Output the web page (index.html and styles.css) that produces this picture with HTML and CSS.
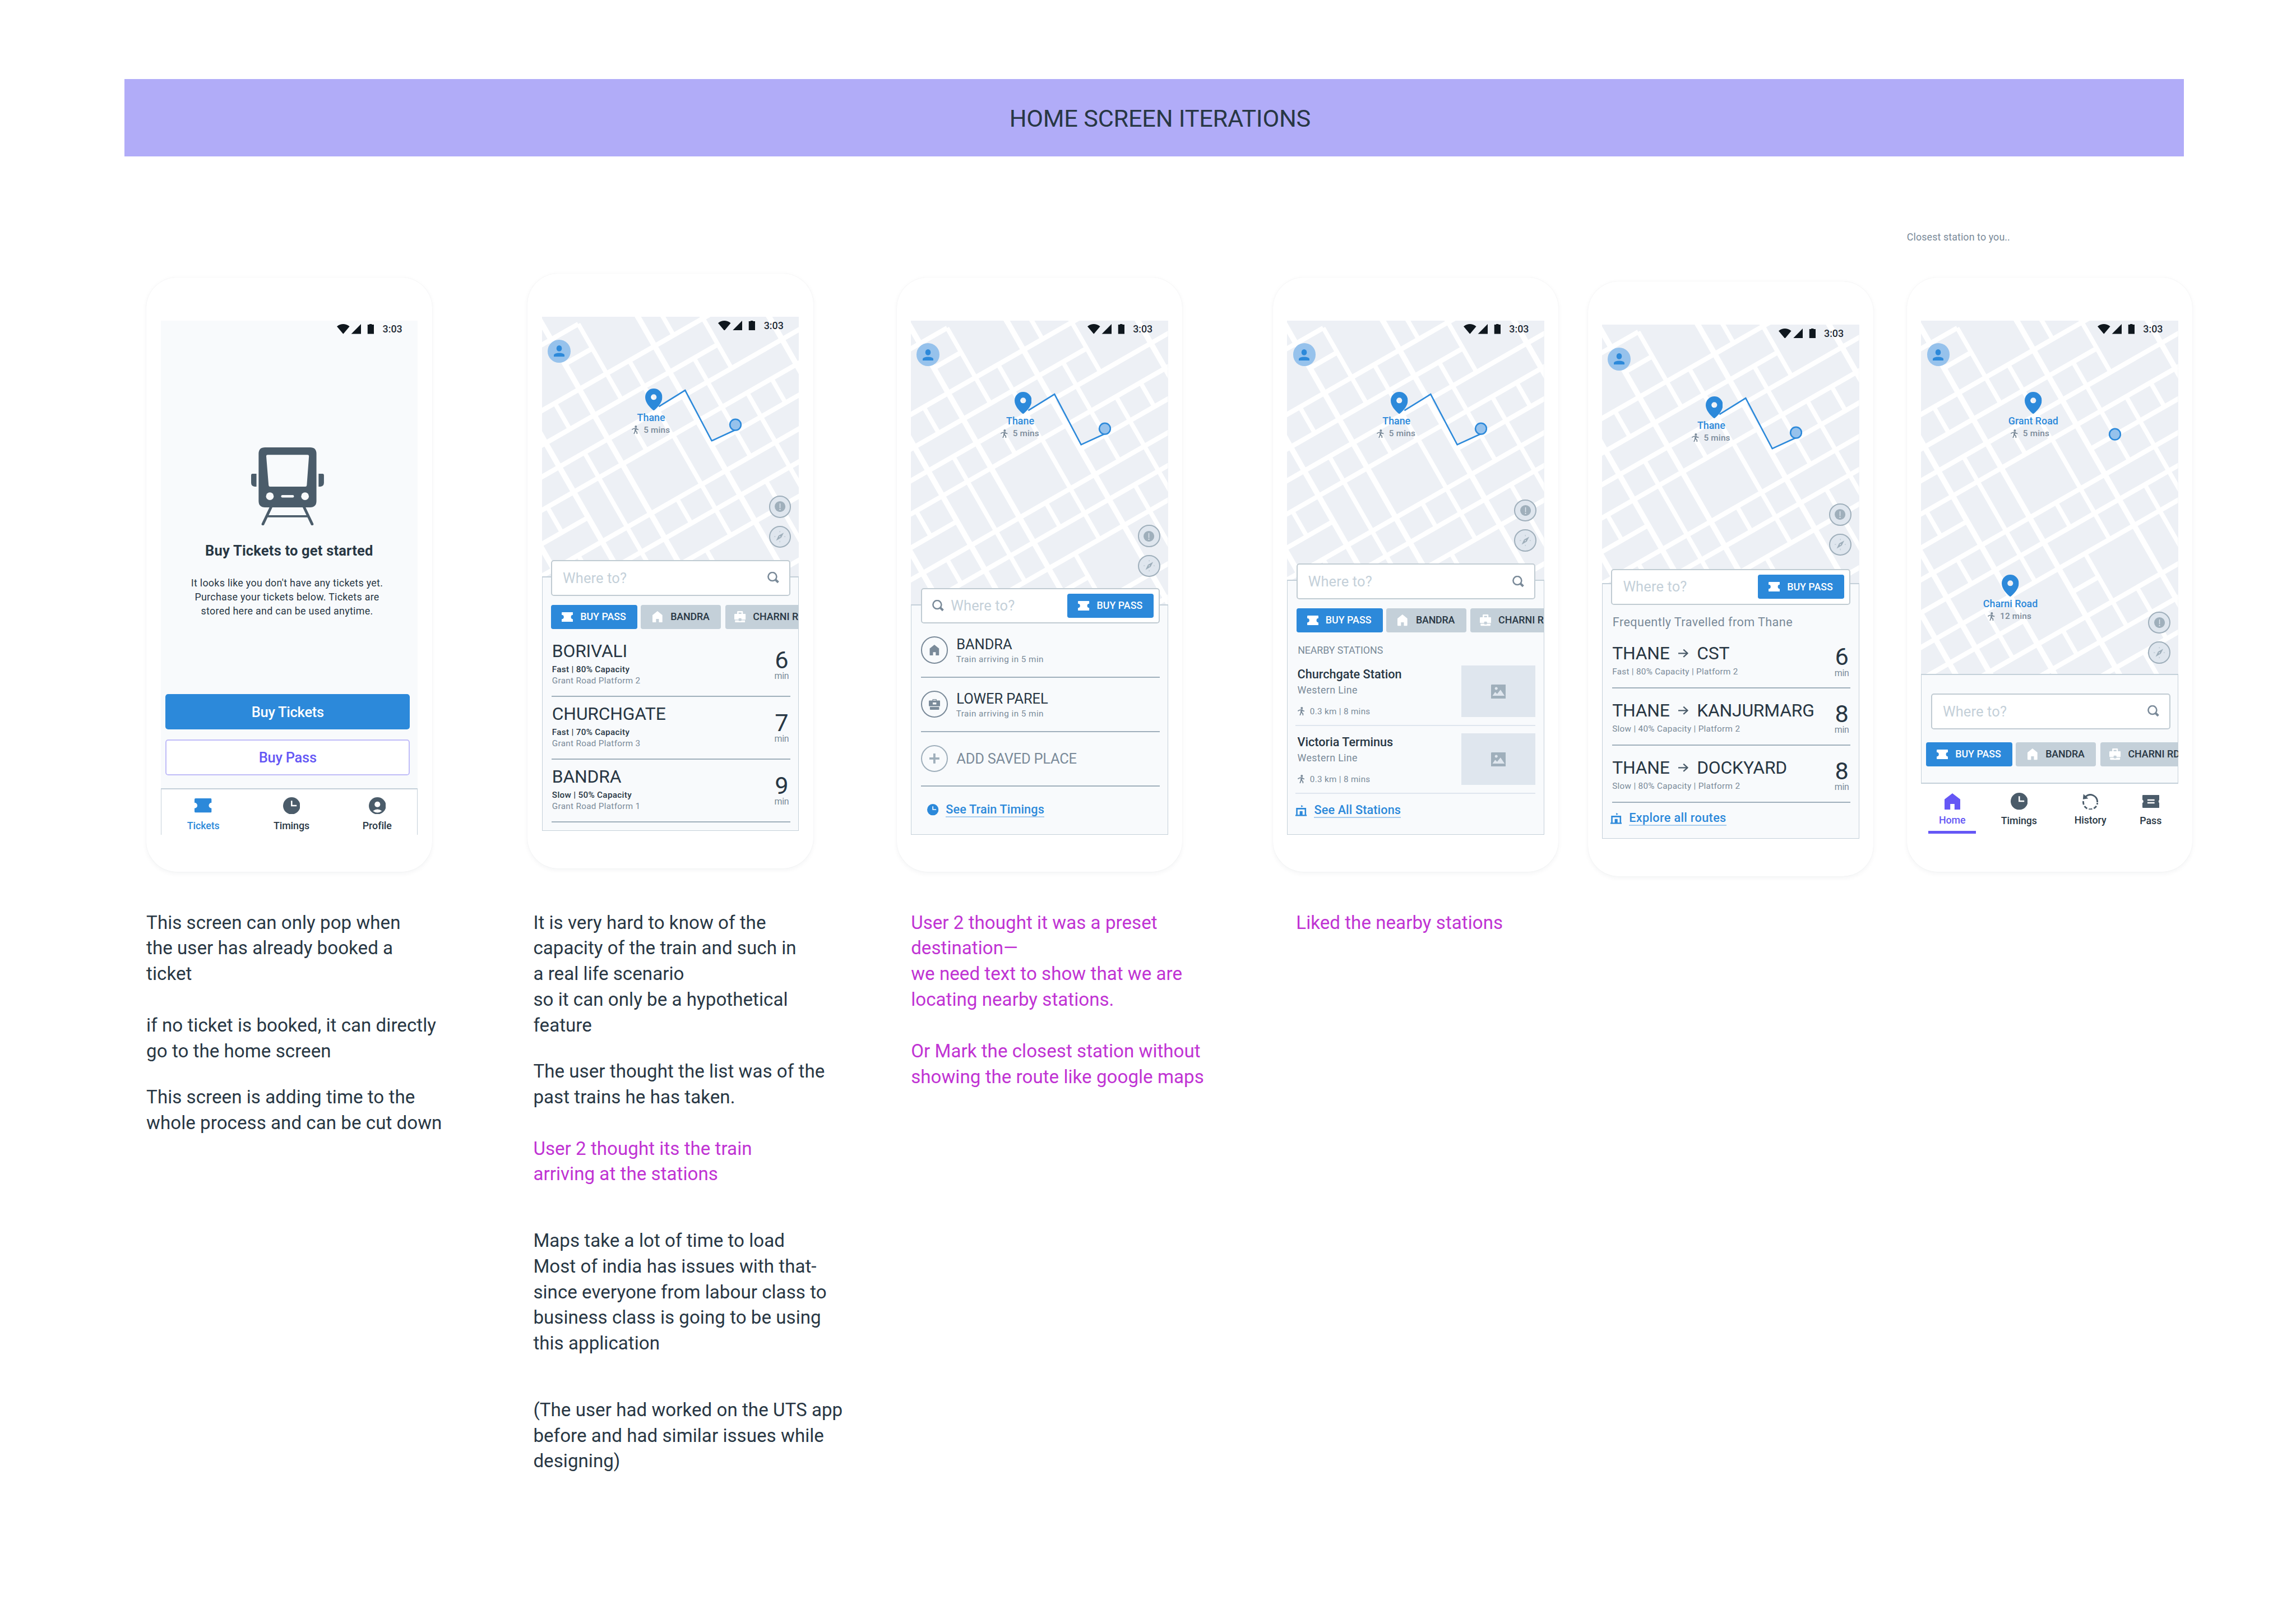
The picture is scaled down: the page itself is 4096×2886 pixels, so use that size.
FILE: index.html
```html
<!DOCTYPE html>
<html lang="en">
<head>
<meta charset="utf-8">
<title>Home screen iterations</title>
<link rel="stylesheet" href="styles.css">
</head>
<body>
<svg class="defs" width="0" height="0" aria-hidden="true">
  <defs>
    <symbol id="map" viewBox="0 0 720 1000">
      <g transform="rotate(-29.8)" fill="none" stroke="#fff">
        <path stroke-width="13.5" d="M-60 68H78M-150 228H722M-200 312H389M-245 389H630M-290 470H583M-340 552H-167M233 548H539M-380 630H492M-430 710H446M-480 794H398M-520 872H-167M-560 949H309M-560 1030H263M-560 1115H214M-10 147H78M-10 870H75"/>
        <path stroke-width="15.5" d="M-10 -20V1150M-167 -110V1060M233 120V1082M552 300V525M-323 552V970M-408 711V920"/>
        <path stroke-width="12.5" d="M78 68V312M294 150V228M389 200V389M151 228V470M154 470V794M312 312V630M-89 228V312M-86 389V794M68 389V470M-252 470V552M-244 630V710M-247 794V949M75 630V710M75 794V1030M81 1115V1210M154 949V1115M-86 949V1030M393 470V802M472 470V548M316 710V937"/>
        <path stroke-width="15.5" d="M233 100V140M552 290V320"/>
        <path stroke-width="12.5" d="M294 140V170M389 195V220"/>
      </g>
    </symbol>
    <symbol id="status" viewBox="0 0 104 28">
      <path fill="#0f171e" d="M0 6.5Q17.5-6.5 35.500 6.500L17.750 28zM67.500 0V28H40zM86 1.500H91V0H98V1.500H104V28H86z"/>
    </symbol>
    <symbol id="user" viewBox="0 0 30 32"><ellipse cx="15" cy="8.500" rx="7.500" ry="8.500"/><path d="M0 32v-4q0-3 4-4.700Q15 19 26 23.300q4 1.700 4 4.700v4z"/></symbol>
    <symbol id="pin" viewBox="0 0 48 62"><path fill-rule="evenodd" d="M24 0A24 24 0 0 0 0 24C0 40 14 54 24 62C34 54 48 40 48 24A24 24 0 0 0 24 0zM24 16a8 8 0 1 1 0 16a8 8 0 1 1 0-16z"/></symbol>
    <symbol id="walk" viewBox="0 0 20 24"><circle cx="11.500" cy="3.200" r="3.200"/><path fill="none" stroke="currentColor" stroke-width="2.800" d="M.6 11.500Q4 8.500 9 8.200M13 8.500L15 11l4.600.6M11 7.500L9 16l-2.500 7.500M11 15.500l3.500 3 .3 5.300"/><path d="M9 7h5l-2 9H8z"/></symbol>
    <symbol id="alert" viewBox="0 0 30 30"><circle cx="15" cy="15" r="15"/><path fill="#dfe6ee" d="M13.800 6h2.400v13.500h-2.400z"/><circle cx="15" cy="23.500" r="1.800" fill="#dfe6ee"/></symbol>
    <symbol id="compass" viewBox="0 0 32 32"><path fill-rule="evenodd" d="M27 5L20 19L5.500 27.500L12.500 13zM16 14.500a1.700 1.700 0 1 0 0 3.400a1.700 1.700 0 1 0 0-3.400z"/><path opacity=".55" d="M15 0h2v4h-2zM15 28h2v4h-2zM0 15h4v2H0zM28 15h4v2h-4z"/></symbol>
    <symbol id="ticket" viewBox="0 0 32 27"><path d="M2 0h28q2 0 2 2v5.500a6 6 0 0 0 0 12v5.500q0 2-2 2H2q-2 0-2-2v-5.500a6 6 0 0 0 0-12V2q0-2 2-2z"/></symbol>
    <symbol id="ticket-lg" viewBox="0 0 48 40"><path d="M3 0h42q3 0 3 3v9a8 8 0 0 0 0 16v9q0 3-3 3H3q-3 0-3-3v-9a8 8 0 0 0 0-16V3q0-3 3-3z"/></symbol>
    <symbol id="pass" viewBox="0 0 48 36"><path fill-rule="evenodd" d="M2 0h44q2 0 2 2v11.500a5 5 0 0 0 0 9V34q0 2-2 2H2q-2 0-2-2V22.500a5 5 0 0 0 0-9V2q0-2 2-2zM14 12v4h20v-4zM14 20v4h20v-4z"/></symbol>
    <symbol id="home" viewBox="0 0 28 32"><path d="M14 0L28 11.500V30q0 2-2 2h-8V22h-8v10H2q-2 0-2-2V11.500z"/></symbol>
    <symbol id="home-lg" viewBox="0 0 44 46"><path d="M22 0L44 17V44q0 2-2 2H28V30H16v16H2q-2 0-2-2V17z"/></symbol>
    <symbol id="case" viewBox="0 0 32 32"><path fill-rule="evenodd" d="M8 8V2q0-2 2-2h12q2 0 2 2v6h6q2 0 2 2v12q0 2-2 2H20v-2q0-2-2-2h-4q-2 0-2 2v2H2q-2 0-2-2V10q0-2 2-2zM12 4v4h8V4z"/><path d="M2 26h10q0 2 2 2h4q2 0 2-2h10v4q0 2-2 2H4q-2 0-2-2z"/></symbol>
    <symbol id="case-dark" viewBox="0 0 32 30"><path fill-rule="evenodd" d="M10 4V2q0-2 2-2h8q2 0 2 2v2h8q2 0 2 2v12q0 2-2 2H2q-2 0-2-2V6q0-2 2-2zM12 2v2h8V2zM11 9.500v5.500h10V9.500z"/><path d="M3 22h26v6q0 2-2 2H5q-2 0-2-2z"/></symbol>
    <symbol id="search" viewBox="0 0 33 33"><circle cx="14" cy="13.500" r="11.800" fill="none" stroke="currentColor" stroke-width="4"/><path fill="none" stroke="currentColor" stroke-width="6.500" d="M21.500 21L30.500 29.500"/></symbol>
    <symbol id="clock" viewBox="0 0 48 48"><circle cx="24" cy="24" r="24"/><path fill="none" stroke="#fff" stroke-width="4" d="M24 10V23.500H38"/></symbol>
    <symbol id="profile" viewBox="0 0 48 48"><circle cx="24" cy="24" r="24"/><circle cx="24" cy="20" r="8" fill="#fff"/><path fill="#fff" d="M11.500 38.500Q24 29 36.500 38.500Q24 48 11.500 38.500z"/></symbol>
    <symbol id="history" viewBox="0 0 44 46"><path fill="none" stroke="currentColor" stroke-width="4.500" d="M9 9.500A19.800 21 0 0 1 42 25"/><path fill="none" stroke="currentColor" stroke-width="4.500" stroke-dasharray="10 4.700" d="M2.500 22A19.800 20.500 0 0 0 42 27"/><path d="M2.800 2L1.300 17L16.300 14.600z"/></symbol>
    <symbol id="station" viewBox="0 0 32 31"><path d="M0 27h32v4H0zM12 17h8v10h-8zM16 0l6 3-6 3z"/><path fill="none" stroke="currentColor" stroke-width="4" d="M4 28V10H28V28"/></symbol>
    <symbol id="image" viewBox="0 0 42 40"><path fill-rule="evenodd" d="M2 0h38q2 0 2 2v36q0 2-2 2H2q-2 0-2-2V2q0-2 2-2zM14.500 7a4 4 0 1 0 .01 0zM4 31.500H38L26.500 14.500L17 26.500L11.500 21z"/></symbol>
    <symbol id="arrow" viewBox="0 0 28 26"><path fill="none" stroke="currentColor" stroke-width="3.600" d="M0 13H26M14.500 2.500L26 13L14.500 23.500"/></symbol>
  </defs>
</svg>

<header class="banner">HOME SCREEN ITERATIONS</header>

<main class="board">
  <!-- 1: empty ticket wallet -->
  <section class="phone">
    <div class="screen wallet">
      <div class="statusbar"><svg><use href="#status"/></svg><span>3:03</span></div>
      <svg class="train" viewBox="0 0 204 219">
        <path fill-rule="evenodd" d="M39 0H165Q183 0 183 18V150Q183 168 165 168H39Q21 168 21 150V18Q21 0 39 0zM46 21Q42 21 42.400 25L49 106Q49.500 110 53 110H152Q155.500 110 156 106L162 25Q162.500 21 158 21z"/>
        <path d="M0 78Q0 74 4 74H15V110H10Q0 109 0 99zM204 78Q204 74 200 74H189V110H194Q204 109 204 99z"/>
        <circle cx="52.500" cy="137" r="10.800" fill="#f8fafc"/><circle cx="151" cy="137" r="10.800" fill="#f8fafc"/>
        <rect x="84" y="133.500" width="36" height="7" rx="3.500" fill="#f8fafc"/>
        <path fill="none" stroke="#4b5c6a" stroke-width="7.500" stroke-linecap="round" d="M56 167L33 215M148 167L171 215"/>
        <path stroke="#4b5c6a" stroke-width="6" d="M44 193H160"/>
      </svg>
      <h2>Buy Tickets to get started</h2>
      <p>It looks like you don't have any tickets yet.<br>Purchase your tickets below. Tickets are<br>stored here and can be used anytime.</p>
      <div class="btn btn-fill">Buy Tickets</div>
      <div class="btn btn-line">Buy Pass</div>
      <nav class="tabs tabs-3">
        <div class="tab on"><svg class="i48 t40"><use href="#ticket-lg"/></svg><span>Tickets</span></div>
        <div class="tab"><svg class="i48"><use href="#clock"/></svg><span>Timings</span></div>
        <div class="tab"><svg class="i48"><use href="#profile"/></svg><span>Profile</span></div>
      </nav>
    </div>
  </section>

  <!-- 2: upcoming trains -->
  <section class="phone up">
    <div class="screen">
      <div class="map h726">
        <svg class="streets"><use href="#map"/></svg>
        <div class="statusbar"><svg><use href="#status"/></svg><span>3:03</span></div>
        <div class="avatar"><svg><use href="#user"/></svg></div>
        <svg class="route" viewBox="0 0 240 170"><path d="M8.600 53.600L82 8L156.500 149.500L223 119"/><circle cx="223" cy="104.600" r="15.500"/></svg>
        <div class="stop"><svg class="pin"><use href="#pin"/></svg><b class="l8">Thane</b><i class="l9"><svg><use href="#walk"/></svg>5 mins</i></div>
        <div class="tools"><span><svg class="a"><use href="#alert"/></svg></span><span><svg><use href="#compass"/></svg></span></div>
      </div>
      <div class="panel p2">
        <div class="search"><span>Where to?</span><svg class="mag"><use href="#search"/></svg></div>
        <div class="chips">
          <div class="chip pass"><svg class="tk"><use href="#ticket"/></svg>BUY PASS</div>
          <div class="chip c2"><svg class="hm"><use href="#home"/></svg>BANDRA</div>
          <div class="chip c3"><svg class="cs"><use href="#case"/></svg>CHARNI RD</div>
        </div>
        <div class="trains">
          <div class="train-row"><div><h3>BORIVALI</h3><p class="dark">Fast | 80% Capacity</p><p>Grant Road Platform 2</p></div><div class="eta"><b>6</b><span>min</span></div></div>
          <div class="train-row"><div><h3>CHURCHGATE</h3><p class="dark">Fast | 70% Capacity</p><p>Grant Road Platform 3</p></div><div class="eta"><b>7</b><span>min</span></div></div>
          <div class="train-row"><div><h3>BANDRA</h3><p class="dark">Slow | 50% Capacity</p><p>Grant Road Platform 1</p></div><div class="eta"><b>9</b><span>min</span></div></div>
        </div>
      </div>
    </div>
  </section>

  <!-- 3: saved places -->
  <section class="phone">
    <div class="screen">
      <div class="map h796">
        <svg class="streets"><use href="#map"/></svg>
        <div class="statusbar"><svg><use href="#status"/></svg><span>3:03</span></div>
        <div class="avatar"><svg><use href="#user"/></svg></div>
        <svg class="route" viewBox="0 0 240 170"><path d="M8.600 53.600L82 8L156.500 149.500L223 119"/><circle cx="223" cy="104.600" r="15.500"/></svg>
        <div class="stop"><svg class="pin"><use href="#pin"/></svg><b class="l8">Thane</b><i class="l9"><svg><use href="#walk"/></svg>5 mins</i></div>
        <div class="tools low"><span><svg class="a"><use href="#alert"/></svg></span><span><svg><use href="#compass"/></svg></span></div>
      </div>
      <div class="panel p3">
        <div class="search with-btn"><svg class="mag"><use href="#search"/></svg><span>Where to?</span><div class="chip pass"><svg class="tk"><use href="#ticket"/></svg>BUY PASS</div></div>
        <div class="places">
          <div class="place"><span class="ring"><svg class="ph"><use href="#home"/></svg></span><div><h3>BANDRA</h3><p>Train arriving in 5 min</p></div></div>
          <div class="place"><span class="ring"><svg class="pc"><use href="#case-dark"/></svg></span><div><h3>LOWER PAREL</h3><p>Train arriving in 5 min</p></div></div>
          <div class="place add"><span class="ring plus"></span><h3>ADD SAVED PLACE</h3></div>
        </div>
        <div class="more"><svg class="ck"><use href="#clock"/></svg><a>See Train Timings</a></div>
      </div>
    </div>
  </section>

  <!-- 4: nearby stations -->
  <section class="phone">
    <div class="screen">
      <div class="map h726">
        <svg class="streets"><use href="#map"/></svg>
        <div class="statusbar"><svg><use href="#status"/></svg><span>3:03</span></div>
        <div class="avatar"><svg><use href="#user"/></svg></div>
        <svg class="route" viewBox="0 0 240 170"><path d="M8.600 53.600L82 8L156.500 149.500L223 119"/><circle cx="223" cy="104.600" r="15.500"/></svg>
        <div class="stop"><svg class="pin"><use href="#pin"/></svg><b class="l8">Thane</b><i class="l9"><svg><use href="#walk"/></svg>5 mins</i></div>
        <div class="tools"><span><svg class="a"><use href="#alert"/></svg></span><span><svg><use href="#compass"/></svg></span></div>
      </div>
      <div class="panel p4">
        <div class="search"><span>Where to?</span><svg class="mag"><use href="#search"/></svg></div>
        <div class="chips">
          <div class="chip pass"><svg class="tk"><use href="#ticket"/></svg>BUY PASS</div>
          <div class="chip c2"><svg class="hm"><use href="#home"/></svg>BANDRA</div>
          <div class="chip c3"><svg class="cs"><use href="#case"/></svg>CHARNI RD</div>
        </div>
        <h4 class="nearby">NEARBY STATIONS</h4>
        <div class="station"><div><h3>Churchgate Station</h3><p>Western Line</p><i><svg><use href="#walk"/></svg>0.3 km | 8 mins</i></div><span class="thumb"><svg><use href="#image"/></svg></span></div>
        <div class="station"><div><h3>Victoria Terminus</h3><p>Western Line</p><i><svg><use href="#walk"/></svg>0.3 km | 8 mins</i></div><span class="thumb"><svg><use href="#image"/></svg></span></div>
        <div class="more"><svg class="st"><use href="#station"/></svg><a>See All Stations</a></div>
      </div>
    </div>
  </section>

  <!-- 5: frequent routes -->
  <section class="phone down">
    <div class="screen">
      <div class="map h724">
        <svg class="streets"><use href="#map"/></svg>
        <div class="statusbar"><svg><use href="#status"/></svg><span>3:03</span></div>
        <div class="avatar"><svg><use href="#user"/></svg></div>
        <svg class="route" viewBox="0 0 240 170"><path d="M8.600 53.600L82 8L156.500 149.500L223 119"/><circle cx="223" cy="104.600" r="15.500"/></svg>
        <div class="stop"><svg class="pin"><use href="#pin"/></svg><b class="l8">Thane</b><i class="l9"><svg><use href="#walk"/></svg>5 mins</i></div>
        <div class="tools"><span><svg class="a"><use href="#alert"/></svg></span><span><svg><use href="#compass"/></svg></span></div>
      </div>
      <div class="panel p5">
        <div class="search with-btn"><span>Where to?</span><div class="chip pass"><svg class="tk"><use href="#ticket"/></svg>BUY PASS</div></div>
        <h4 class="frequent">Frequently Travelled from Thane</h4>
        <div class="trip"><div><h3>THANE<svg><use href="#arrow"/></svg>CST</h3><p>Fast | 80% Capacity | Platform 2</p></div><div class="eta"><b>6</b><span>min</span></div></div>
        <div class="trip"><div><h3>THANE<svg><use href="#arrow"/></svg>KANJURMARG</h3><p>Slow | 40% Capacity | Platform 2</p></div><div class="eta"><b>8</b><span>min</span></div></div>
        <div class="trip"><div><h3>THANE<svg><use href="#arrow"/></svg>DOCKYARD</h3><p>Slow | 80% Capacity | Platform 2</p></div><div class="eta"><b>8</b><span>min</span></div></div>
        <div class="more"><svg class="st"><use href="#station"/></svg><a>Explore all routes</a></div>
      </div>
    </div>
  </section>

  <!-- 6: full map with tab bar -->
  <section class="phone">
    <div class="caption">Closest station to you..</div>
    <div class="screen">
      <div class="map h990">
        <svg class="streets"><use href="#map"/></svg>
        <div class="statusbar"><svg><use href="#status"/></svg><span>3:03</span></div>
        <div class="avatar"><svg><use href="#user"/></svg></div>
        <svg class="route here" viewBox="0 0 240 170"><circle cx="223" cy="104.600" r="15.500"/></svg>
        <div class="stop"><svg class="pin"><use href="#pin"/></svg><b>Grant Road</b><i class="l9"><svg><use href="#walk"/></svg>5 mins</i></div>
        <div class="stop charni"><svg class="pin"><use href="#pin"/></svg><b>Charni Road</b><i class="l2"><svg><use href="#walk"/></svg>12 mins</i></div>
        <div class="tools lowest"><span><svg class="a"><use href="#alert"/></svg></span><span><svg><use href="#compass"/></svg></span></div>
      </div>
      <div class="panel p6">
        <div class="search"><span>Where to?</span><svg class="mag"><use href="#search"/></svg></div>
        <div class="chips">
          <div class="chip pass"><svg class="tk"><use href="#ticket"/></svg>BUY PASS</div>
          <div class="chip c2"><svg class="hm"><use href="#home"/></svg>BANDRA</div>
          <div class="chip c3"><svg class="cs"><use href="#case"/></svg>CHARNI RD</div>
        </div>
      </div>
      <nav class="tabs tabs-4">
        <div class="tab on"><svg class="i44"><use href="#home-lg"/></svg><span>Home</span></div>
        <div class="tab"><svg class="i48"><use href="#clock"/></svg><span>Timings</span></div>
        <div class="tab"><svg class="i44"><use href="#history"/></svg><span>History</span></div>
        <div class="tab"><svg class="i48 t36"><use href="#pass"/></svg><span>Pass</span></div>
      </nav>
    </div>
  </section>

  <div class="note">
    <p>This screen can only pop when<br>the user has already booked a<br>ticket</p>
    <p class="g72">if no ticket is booked, it can directly<br>go to the home screen</p>
    <p class="g57">This screen is adding time to the<br>whole process and can be cut down</p>
  </div>
  <div class="note n2">
    <p>It is very hard to know of the<br>capacity of the train and such in<br>a real life scenario<br>so it can only be a hypothetical<br>feature</p>
    <p class="g57">The user thought the list was of the<br>past trains he has taken.</p>
    <p class="g72 pink">User 2 thought its the train<br>arriving at the stations</p>
    <p class="g114">Maps take a lot of time to load<br>Most of india has issues with that-<br>since everyone from labour class to<br>business class is going to be using<br>this application</p>
    <p class="g114">(The user had worked on the UTS app<br>before and had similar issues while<br>designing)</p>
  </div>
  <div class="note n3 pink">
    <p>User 2 thought it was a preset<br>destination—<br>we need text to show that we are<br>locating nearby stations.</p>
    <p class="g72">Or Mark the closest station without<br>showing the route like google maps</p>
  </div>
  <div class="note n4 pink"><p>Liked the nearby stations</p></div>
</main>
</body>
</html>
```
FILE: styles.css
```css
:root {
  --ink: #283744;
  --slate: #4b5c6a;
  --grey: #7a8a99;
  --mid: #9fafbb;
  --line: #c4d0d9;
  --pale: #dfe6ee;
  --bg: #f8fafc;
  --blue: #2c89da;
  --sky: #96c2ec;
  --violet: #6557f5;
}

* { box-sizing: border-box; }

html { overflow: hidden; background: #fff; }

body {
  margin: 0;
  padding-top: 222px;
  height: 4530px;
  zoom: 0.63682;
  overflow: hidden;
  background: #fff;
  color: var(--ink);
  font-family: Roboto, "Liberation Sans", sans-serif;
  font-size: 28px;
}

h2, h3, h4, p { margin: 0; font-weight: 400; }
i, b { font-style: normal; font-weight: 500; }
svg { display: block; flex: none; fill: currentColor; }
.defs { position: absolute; }

.banner {
  width: 5769px;
  height: 216px;
  margin-left: 349px;
  padding: 0 0 0 32px;
  background: #b1acf8;
  text-align: center;
  font-size: 68px;
  line-height: 222px;
  letter-spacing: -0.006em;
}

.board {
  display: grid;
  grid-template-columns: 1068px 1034px 1054px 882px 894px 800px;
  grid-template-rows: 1771px auto;
  margin: 339px 0 0 410px;
}

/* Device frames */
.phone {
  position: relative;
  width: 800px;
  height: 1665px;
  padding: 120.6px 40px 0;
  border-radius: 86px;
  background: #fff;
  box-shadow: 0 4px 14px rgba(20, 30, 50, .05), 0 0 2px rgba(20, 30, 50, .08);
}
.phone.up { margin-top: -10px; }
.phone.down { margin-top: 12px; }

.caption {
  position: absolute;
  left: 0;
  top: -128px;
  line-height: 32px;
  color: var(--grey);
  font-size: 28px;
  letter-spacing: .006em;
}

.screen {
  display: flex;
  flex-direction: column;
  width: 720px;
  height: 1440px;
}

.statusbar {
  position: relative;
  display: flex;
  justify-content: flex-end;
  gap: 24px;
  height: 48px;
  padding: 10px 43px 0 0;
  font-weight: 500;
  line-height: 29px;
  color: #1f2a35;
}
.statusbar svg { width: 104px; height: 28px; }

/* Wallet screen */
.wallet { background: var(--bg); }
.train {
  width: 204px;
  height: 219px;
  margin: 307px 0 0 254px;
  fill: var(--slate);
}
.wallet h2 {
  margin-top: 47px;
  text-align: center;
  font-size: 40px;
  font-weight: 700;
  line-height: 48px;
  letter-spacing: .008em;
}
.wallet p {
  margin: 46px 12px 213px 0;
  text-align: center;
  line-height: 39.4px;
  letter-spacing: .017em;
}
.btn {
  width: 684px;
  height: 100px;
  margin-left: 14px;
  border-radius: 8px;
  text-align: center;
  font-size: 40px;
  font-weight: 500;
  line-height: 103px;
  letter-spacing: -.01em;
}
.btn-fill { background: var(--blue); color: #fff; }
.btn-line {
  margin-top: 28px;
  border: 4px solid #c0bcf8;
  background: #fff;
  color: var(--violet);
  line-height: 95px;
}

/* Tab bars */
.tabs {
  display: grid;
  background: #fff;
  color: var(--slate);
}
.tabs-3 {
  grid-template-columns: 236px 258px 222px;
  height: 130px;
  margin-top: 36px;
  padding-top: 22px;
  border: solid var(--line);
  border-width: 4px 2px 0;
}
.tabs-4 {
  grid-template-columns: 174px 200px 200px 138px;
  padding-top: 25px;
}
.tab {
  display: flex;
  flex-direction: column;
  align-items: center;
  font-weight: 500;
  line-height: 32px;
  letter-spacing: -.004em;
}
.tab span { margin-top: 14px; color: var(--ink); }
.tabs-3 .tab span { margin-top: 16px; }
.i48 { width: 48px; height: 48px; }
.i44 { width: 44px; height: 46px; margin: 1px 0; }
.t40 { height: 40px; margin: 4px 0; }
.t36 { height: 36px; margin: 6px 0; }
.tabs-3 .on, .tabs-3 .on span { color: var(--blue); }
.tabs-4 .on, .tabs-4 .on span { color: var(--violet); }
.tabs-4 .on::after {
  content: "";
  width: 134px;
  height: 8px;
  margin-top: 13px;
  background: var(--violet);
}

/* Map */
.map {
  position: relative;
  flex: none;
  overflow: hidden;
  background: #edf0f5;
}
.h724 { height: 724px; }
.h726 { height: 726px; }
.h796 { height: 796px; }
.h990 { height: 990px; }
.streets { position: absolute; left: 0; top: 0; width: 720px; height: 1000px; }
.avatar {
  position: absolute;
  left: 16px;
  top: 64px;
  display: grid;
  place-items: center;
  width: 64px;
  height: 64px;
  border-radius: 50%;
  background: var(--sky);
  color: var(--blue);
}
.avatar svg { width: 30px; height: 32px; }
.route {
  position: absolute;
  left: 320px;
  top: 198px;
  width: 240px;
  height: 170px;
  fill: none;
  stroke: var(--blue);
  stroke-width: 4;
}
.route circle { fill: var(--sky); }
.route.here { top: 214.500px; }
.stop {
  position: absolute;
  left: 290px;
  top: 200px;
  display: flex;
  flex-direction: column;
  align-items: center;
  width: 48px;
  color: var(--blue);
  white-space: nowrap;
}
.stop.charni { left: 226px; top: 712px; }
.stop .pin { width: 48px; height: 62px; }
.stop b { margin-top: 3px; line-height: 34px; }
.stop i {
  display: flex;
  align-items: center;
  gap: 14px;
  margin-top: 3px;
  color: var(--grey);
  font-size: 24px;
  line-height: 30px;
  letter-spacing: .012em;
}
.stop i svg { width: 20px; height: 24px; }
.stop .l8 { margin-left: -16px; }
.stop .l9 { margin-left: -18px; }
.stop .l2 { margin-left: -4px; }
.tools {
  position: absolute;
  right: 22px;
  top: 501px;
  display: grid;
  gap: 22px;
}
.tools.low { top: 573px; }
.tools.lowest { top: 815px; }
.tools span {
  display: grid;
  place-items: center;
  width: 62px;
  height: 62px;
  border: 4px solid var(--mid);
  border-radius: 50%;
  background: var(--pale);
  color: var(--mid);
}
.tools svg { width: 32px; height: 32px; }
.tools .a { width: 30px; height: 30px; }

/* Bottom panel */
.panel {
  position: relative;
  flex: 1 1 0;
  min-height: 0;
  padding-left: 22px;
  border: solid var(--line);
  border-width: 4px 2px 2px;
  background: var(--bg);
}
.p3, .p6 { padding-left: 26px; }
.p6 { flex: none; height: 308px; border-bottom-width: 4px; }

.search {
  display: flex;
  align-items: center;
  justify-content: space-between;
  width: 670px;
  height: 100px;
  margin: -48px 0 0 2px;
  padding: 0 28px 0 30px;
  border: 4px solid #c0cbd2;
  border-radius: 8px;
  background: #fff;
  color: var(--grey);
}
.search > span {
  color: var(--line);
  font-size: 40px;
  line-height: 48px;
  letter-spacing: .005em;
}
.mag { width: 33px; height: 33px; }
.with-btn { padding-right: 14px; }
.with-btn .mag + span { margin: 0 auto 0 20px; }
.p3 .search { margin: -50px 0 0; padding-left: 28px; }
.p5 .search { margin-top: -43px; }
.p6 .search { margin: 52px 0 0; }

.chips {
  display: flex;
  margin: 25px 0 0 2px;
  overflow: hidden;
}
.p6 .chips { margin: 36px -2px 0 -14px; }
.chip {
  display: flex;
  flex: none;
  align-items: center;
  height: 68px;
  border-radius: 6px;
  background: var(--line);
  font-weight: 500;
  line-height: 32px;
  white-space: nowrap;
}
.chip svg { color: #fff; }
.chip.pass { width: 242px; padding-left: 30px; background: var(--blue); color: #fff; }
.chip.c2 { width: 224px; margin-left: 10px; padding-left: 32px; letter-spacing: -.01em; }
.chip.c3 { width: 260px; margin-left: 12px; padding-left: 26px; }
.tk { width: 32px; height: 27px; margin-right: 20px; }
.hm { width: 28px; height: 32px; margin-right: 23px; }
.cs { width: 32px; height: 32px; margin-right: 20px; }

.eta {
  display: flex;
  flex: none;
  flex-direction: column;
  align-items: center;
  width: 48px;
}
.eta b { font-size: 68px; font-weight: 400; line-height: 68px; }
.eta span {
  margin-top: -2px;
  color: var(--grey);
  font-size: 25px;
  line-height: 24px;
  letter-spacing: -.02em;
}

.train-row {
  display: flex;
  justify-content: space-between;
  width: 668px;
  height: 176px;
  margin-left: 4px;
  padding-left: 1px;
  border-bottom: 4px solid var(--mid);
}
.trains { margin-top: 14px; }
.train-row h3 { margin-top: 17px; font-size: 50px; line-height: 60px; letter-spacing: -.006em; }
.train-row p, .trip p {
  color: var(--grey);
  font-size: 24px;
  line-height: 32px;
  letter-spacing: .02em;
}
.train-row .dark { margin-top: 6px; color: var(--ink); font-weight: 500; }
.train-row .eta { padding-top: 40px; }

.place {
  display: flex;
  gap: 22px;
  width: 670px;
  height: 152px;
  padding-top: 36px;
  border-bottom: 4px solid var(--mid);
}
.ring {
  display: grid;
  flex: none;
  place-items: center;
  width: 76px;
  height: 76px;
  border: 4px solid var(--grey);
  border-radius: 50%;
  color: var(--grey);
}
.ph { width: 28px; height: 30px; }
.pc { width: 32px; height: 30px; }
.ring.plus {
  border-color: var(--mid);
  background:
    linear-gradient(var(--mid), var(--mid)) center / 28px 6px no-repeat,
    linear-gradient(var(--mid), var(--mid)) center / 6px 28px no-repeat;
}
.place h3 { padding-left: 2px; font-size: 40px; line-height: 45px; letter-spacing: -.004em; }
.place p { margin-top: 4px; padding-left: 1px; color: var(--grey); font-size: 24px; line-height: 32px; letter-spacing: .03em; }
.place.add h3 { color: var(--grey); line-height: 78px; letter-spacing: -.01em; }

.more {
  display: flex;
  align-items: center;
  color: var(--blue);
  font-size: 34px;
  font-weight: 500;
  line-height: 40px;
}
.more a { border-bottom: 4px solid #a9cdee; letter-spacing: .006em; }
.p3 .more { margin: 44px 0 0 18px; gap: 20px; }
.ck { width: 32px; height: 32px; }
.st { width: 32px; height: 31px; margin-right: 20px; }
.p4 .more { margin-top: 25px; }
.p5 .more { margin-top: 22px; }
.p5 .more a { letter-spacing: .016em; }

.nearby {
  margin: 33px 0 5px 6px;
  color: var(--grey);
  line-height: 34px;
  letter-spacing: -.005em;
}
.station {
  display: flex;
  justify-content: space-between;
  width: 671px;
  height: 190px;
  padding-left: 5px;
  border-bottom: 4px solid var(--pale);
}
.station h3 { margin-top: 25px; font-size: 34px; font-weight: 500; line-height: 42px; }
.station p { margin-top: 5px; color: var(--grey); line-height: 34px; letter-spacing: .02em; }
.station i {
  display: flex;
  align-items: center;
  gap: 15px;
  margin-top: 27px;
  color: var(--grey);
  font-size: 24px;
  font-weight: 400;
  line-height: 32px;
  letter-spacing: .02em;
}
.station i svg { width: 20px; height: 24px; }
.thumb {
  display: grid;
  place-items: center;
  width: 206px;
  height: 144px;
  margin-top: 21px;
  background: var(--pale);
  color: var(--mid);
}
.thumb svg { width: 42px; height: 40px; }

.frequent {
  margin: 29px 0 6px 6px;
  color: var(--grey);
  font-size: 34px;
  line-height: 40px;
  letter-spacing: .019em;
}
.trip {
  display: flex;
  justify-content: space-between;
  width: 668px;
  height: 160px;
  margin-left: 4px;
  padding-left: 1px;
  border-bottom: 4px solid var(--mid);
}
.trip h3 {
  display: flex;
  align-items: center;
  margin-top: 31px;
  font-size: 50px;
  line-height: 60px;
  letter-spacing: -.006em;
}
.trip h3 svg { width: 28px; height: 26px; margin: 2px 24px 0 24px; color: var(--slate); }
.trip p { margin-top: 6px; }
.trip .eta { padding-top: 38px; }

/* Research notes under each frame */
.note {
  font-size: 52px;
  line-height: 72px;
  letter-spacing: .001em;
  white-space: nowrap;
}
.n2 { margin-left: 16px; }
.n3 { margin-left: 40px; }
.n4 { margin-left: 65px; }
.g57 { margin-top: 57px; }
.g72 { margin-top: 72px; }
.g114 { margin-top: 114px; }
.pink { color: #c033d3; }
```
